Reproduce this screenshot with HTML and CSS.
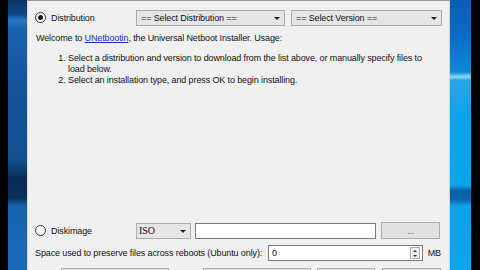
FILE: index.html
```html
<!DOCTYPE html>
<html>
<head>
<meta charset="utf-8">
<link rel="stylesheet" href="styles.css">
</head>
<body>
<div class="screen">
  <div class="edge"></div>
  <div class="desk desk-left"></div>
  <div class="dialog">
    <div class="row row-dist">
      <label class="radio-label"><span class="radio checked"></span>Distribution</label>
      <div class="combo combo-dist"><span>== Select Distribution ==</span><span class="arrow"></span></div>
      <div class="combo combo-ver"><span>== Select Version ==</span><span class="arrow"></span></div>
    </div>
    <p class="welcome">Welcome to <a class="link">UNetbootin</a>, the Universal Netboot Installer. Usage:</p>
    <ol class="steps">
      <li>Select a distribution and version to download from the list above, or manually specify files to load below.</li>
      <li>Select an installation type, and press OK to begin installing.</li>
    </ol>
    <div class="spacer"></div>
    <div class="row row-disk">
      <label class="radio-label"><span class="radio"></span>Diskimage</label>
      <div class="combo combo-iso"><span>ISO</span><span class="arrow"></span></div>
      <div class="field field-path"></div>
      <div class="btn btn-browse">...</div>
    </div>
    <div class="row row-space">
      <span class="space-label">Space used to preserve files across reboots (Ubuntu only):</span>
      <div class="spin"><span>0</span><span class="spin-btns"><span class="up"></span><span class="down"></span></span></div>
      <span class="unit">MB</span>
    </div>
    <div class="row row-buttons">
      <div class="btn btn-a"></div>
      <div class="btn btn-b"></div>
      <div class="btn btn-c"></div>
      <div class="btn btn-d"></div>
    </div>
  </div>
  <div class="desk desk-right"></div>
  <div class="edge edge-right"></div>
</div>
</body>
</html>
```

FILE: styles.css
```css
* { box-sizing: border-box; }
html, body { margin: 0; padding: 0; background: #000; }
.screen {
  width: 480px; height: 270px; overflow: hidden;
  display: flex;
  font-family: "Liberation Sans", Arial, sans-serif;
  font-size: 9px;
  letter-spacing: -0.12px;
  color: #111;
}
.edge { width: 8px; background: #020202; flex: none; }
.edge-right { width: 9px; }
.desk { flex: none; }
.desk-left {
  width: 19px;
  background: linear-gradient(to bottom,
    #0c3565 0px, #0f4583 14px, #2678c8 20px, #1b62ae 28px, #14559f 80px,
    #12508f 160px, #0a2d58 178px, #0b2f5a 198px, #1863b0 206px, #1b6bb8 270px);
}
.desk-right {
  width: 21px;
  background: linear-gradient(to bottom,
    #0b5db2 0px, #0a6fc8 40px, #0c8ad8 72px, #8fd8f4 77px, #27a6e6 80px,
    #0aa4ec 120px, #06a7ee 185px, #075fa6 191px, #0867ae 200px, #0aa2ea 206px, #0aa6ee 270px);
}
.dialog {
  width: 423px; height: 270px; flex: none;
  background: #f0f0f0;
  border-top: 1px solid #8e9b8c;
  border-left: 1px solid #d8d8d8;
  border-right: 1px solid #cfd3d6;
  display: flex; flex-direction: column;
  padding: 7px 8px 0 7px;
  overflow: hidden;
}
.row { display: flex; align-items: center; flex: none; }
.radio-label { display: flex; align-items: center; width: 101px; flex: none; }
.radio {
  width: 11px; height: 11px; border-radius: 50%;
  border: 1px solid #333; background: #fff;
  margin-right: 5px; position: relative; flex: none;
}
.radio.checked::after {
  content: ""; position: absolute; left: 2px; top: 2px;
  width: 5px; height: 5px; border-radius: 50%; background: #1a1a1a;
}
.combo {
  height: 16px; background: #e5e5e5; border: 1px solid #acacac;
  display: flex; align-items: center; justify-content: space-between;
  padding: 0 4px 0 4px; flex: none;
}
.arrow {
  width: 0; height: 0;
  border-left: 3px solid transparent; border-right: 3px solid transparent;
  border-top: 3px solid #222;
  margin-top: 1px;
}
.combo-dist { width: 149px; }
.combo-ver { width: 151px; margin-left: 6px; }
.welcome { margin: 7px 0 0 1px; line-height: 11px; }
.link { color: #1a2fd0; text-decoration: underline; }
.steps { margin: 9px 0 0 0; padding: 0 16px 0 33px; line-height: 11px; }
.steps li { padding-left: 0; }
.spacer { flex: 1; }
.combo-iso { width: 55px; padding-left: 2px; font-family: "Liberation Serif", serif; font-size: 10px; }
.field-path { width: 181px; height: 16px; margin-left: 4px; background: #fff; border: 1px solid #7a7a7a; }
.btn {
  height: 17px; background: #e1e1e1; border: 1px solid #adadad;
  display: flex; align-items: center; justify-content: center; color: #666;
  flex: none;
}
.btn-browse { width: 59px; margin-left: 5px; }
.row-dist { height: 17px; margin-top: 1px; }
.row-disk { height: 17px; margin-bottom: 6px; }
.row-space { height: 16px; }
.space-label { width: 233px; padding-left: 0; flex: none; white-space: nowrap; }
.spin {
  width: 158px; height: 16px; background: #fff; border: 1px solid #7a7a7a;
  display: flex; align-items: center; justify-content: space-between; padding-left: 3px;
}
.spin-btns {
  width: 10px; height: 12px; margin-right: 2px; border: 1px solid #adadad; background: #f0f0f0;
  display: flex; flex-direction: column; align-items: center; justify-content: space-around;
}
.spin-btns .up { width: 0; height: 0; border-left: 2px solid transparent; border-right: 2px solid transparent; border-bottom: 2px solid #333; }
.spin-btns .down { width: 0; height: 0; border-left: 2px solid transparent; border-right: 2px solid transparent; border-top: 2px solid #333; }
.unit { margin-left: 5px; }
.row-buttons { margin-top: 7px; height: 2px; align-items: flex-start; }
.btn-a { width: 108px; margin-left: 26px; }
.btn-b { width: 108px; margin-left: 34px; }
.btn-c { width: 58px; margin-left: 6px; }
.btn-d { width: 59px; margin-left: 7px; }
```
